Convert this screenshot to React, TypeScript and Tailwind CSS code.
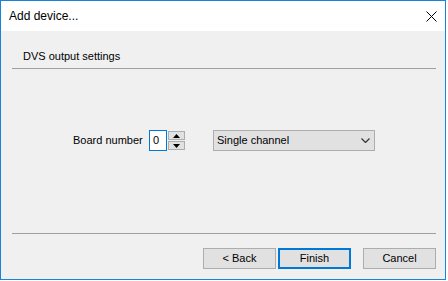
const font = { fontFamily: '"Liberation Sans", Arial, sans-serif' };

function Arrow({ up }: { up?: boolean }) {
  return (
    <svg width="7" height="4" viewBox="0 0 7 4" className="block">
      {up ? <polygon points="0,4 7,4 3.5,0" fill="#000" /> : <polygon points="0,0 7,0 3.5,4" fill="#000" />}
    </svg>
  );
}

function Button({ label, primary }: { label: string; primary?: boolean }) {
  return (
    <button
      className={
        primary
          ? "w-[73px] h-[21px] bg-[#e1e1e1] border-2 border-[#0078d7] text-[11px] text-black flex items-center justify-center"
          : "w-[73px] h-[21px] bg-[#e1e1e1] border border-[#adadad] text-[11px] text-black flex items-center justify-center"
      }
    >
      {label}
    </button>
  );
}

export default function App() {
  return (
    <div className="w-[448px] h-[281px] bg-white" style={font}>
      <div className="w-[446px] h-[280px] border border-[#1883d7] flex flex-col">
        {/* title bar */}
        <div className="h-[30px] bg-white flex items-center justify-between pl-[8px] pr-[7px]">
          <span className="text-[12px] text-black">Add device...</span>
          <svg width="11" height="11" viewBox="0 0 11 11" className="mr-[1px]">
            <path d="M0.5 0.5 L10.5 10.5 M10.5 0.5 L0.5 10.5" stroke="#000" strokeWidth="1" />
          </svg>
        </div>

        {/* body */}
        <div className="flex-1 bg-[#f0f0f0] flex flex-col pl-[11px] pr-[9px]">
          <div className="h-[37px] flex items-end pb-[4px] pl-[11px]">
            <span className="text-[11px] text-black">DVS output settings</span>
          </div>
          <div className="h-px bg-[#a0a0a0]" />

          <div className="h-[164px] pt-[61px]">
            <div className="flex items-center ml-[61px] h-[21px]">
              <span className="w-[76px] text-[11px] text-black">Board number</span>
              <div className="flex h-[21px]">
                <div className="w-[18px] h-[21px] bg-white border border-[#0078d7] text-[11px] text-black flex items-center pl-[3px]">
                  0
                </div>
                <div className="w-[18px] h-[21px] flex flex-col gap-px py-px pl-px">
                  <div className="h-[9px] bg-[#e1e1e1] border border-[#adadad] flex items-center justify-center">
                    <Arrow up />
                  </div>
                  <div className="h-[9px] bg-[#e1e1e1] border border-[#adadad] flex items-center justify-center">
                    <Arrow />
                  </div>
                </div>
              </div>
              <div className="ml-[28px] w-[162px] h-[21px] bg-[#e1e1e1] border border-[#adadad] flex items-center justify-between pl-[3px] pr-[4px]">
                <span className="text-[11px] text-black">Single channel</span>
                <svg width="9" height="5" viewBox="0 0 9 5" className="block">
                  <path d="M0.5 0.5 L4.5 4.5 L8.5 0.5" fill="none" stroke="#333" strokeWidth="1.2" />
                </svg>
              </div>
            </div>
          </div>

          <div className="h-px bg-[#a0a0a0]" />
          <div className="flex-1 flex justify-end items-start pt-[14px]">
            <div className="flex">
              <Button label="< Back" />
              <div className="ml-[2px]">
                <Button label="Finish" primary />
              </div>
              <div className="ml-[12px]">
                <Button label="Cancel" />
              </div>
            </div>
          </div>
        </div>
      </div>
    </div>
  );
}
